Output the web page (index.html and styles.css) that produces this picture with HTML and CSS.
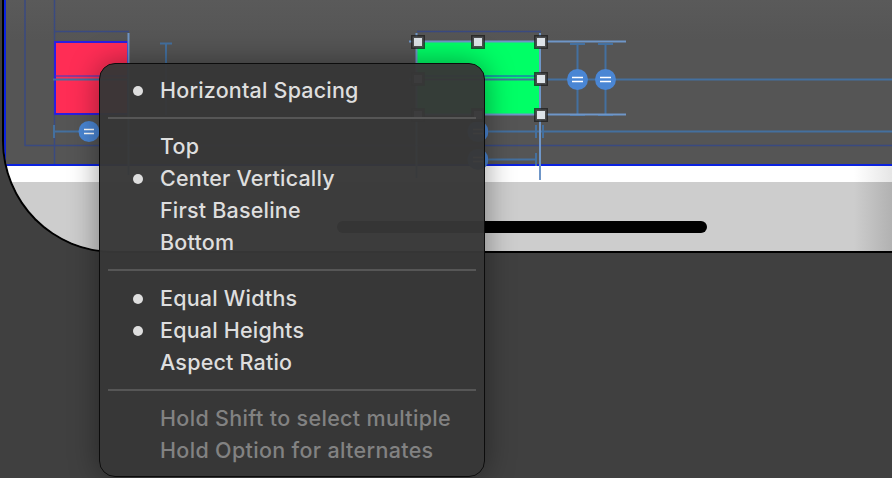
FILE: index.html
```html
<!DOCTYPE html>
<html lang="en">

<head>
    <meta charset="utf-8">
    <meta name="viewport" content="width=device-width, initial-scale=1.0">
    <title>Constraints Menu</title>
    <link rel="stylesheet" href="styles.css">
</head>

<body>
    <div class="device">
        <div class="screen"></div>
        <div class="safe-band"></div>
        <div class="bottom-bar"><span class="home-bar"></span></div>
    </div>

    <svg class="canvas" width="892" height="478" viewBox="0 0 892 478">
        <!-- layout margins -->
        <g class="guide-dark">
            <path d="M25 0V145.500H892" />
            <path d="M54.500 0V164" />
            <path d="M54 31.500H129" />
            <path d="M417 31.500H541" />
        </g>

        <!-- views -->
        <rect class="view-red" x="55" y="42" width="73" height="72" />
        <rect class="view-green" x="417" y="42" width="123" height="72" />
        <path class="view-split" d="M55 76H128M417 76H540" />

        <!-- constraints -->
        <g class="constraint">
            <path d="M53 79.500H128" />
            <path d="M409 79.500H892" />
            <path d="M160 43.500H172M166 43.500V115" />
            <path d="M54 125V138M54 131.500H80" />
            <path d="M489 131.500H892M536 125V138M543 125V138" />
            <path d="M489 159.500H536M536 153V166" />
            <path d="M577.500 43V115M605.500 43V115" />
            <path d="M570 44H585M598 44H613M570 115H585M598 115H613" />
        </g>

        <g class="selection">
            <path d="M128.500 33V175" />
            <path d="M409 41.500H626" />
            <path d="M417 114.500H626" />
            <path d="M416.500 33V178" />
            <path d="M540 33V180" />
        </g>

        <!-- equal badges -->
        <g class="badge">
            <circle cx="89" cy="131.500" r="10.500" />
            <path d="M84 129.500H94M84 133.500H94" />
        </g>
        <g class="badge">
            <circle cx="478" cy="131.500" r="10.500" />
            <path d="M473 129.500H483M473 133.500H483" />
        </g>
        <g class="badge">
            <circle cx="478" cy="159.500" r="10.500" />
            <path d="M473 157.500H483M473 161.500H483" />
        </g>
        <g class="badge">
            <circle cx="577.500" cy="79.500" r="10.500" />
            <path d="M572 77.500H583M572 81.500H583" />
        </g>
        <g class="badge">
            <circle cx="605.500" cy="79.500" r="10.500" />
            <path d="M600 77.500H611M600 81.500H611" />
        </g>

        <!-- resize handles -->
        <g class="handle">
            <rect x="412.500" y="36.500" width="11" height="11" />
            <rect x="472.500" y="36.500" width="11" height="11" />
            <rect x="535.500" y="36.500" width="11" height="11" />
            <rect x="412.500" y="73.500" width="11" height="11" />
            <rect x="535.500" y="73.500" width="11" height="11" />
            <rect x="412.500" y="109.500" width="11" height="11" />
            <rect x="472.500" y="109.500" width="11" height="11" />
            <rect x="535.500" y="109.500" width="11" height="11" />
        </g>
    </svg>

    <div class="menu">
        <div class="menu-row"><span class="mark on"></span>Horizontal Spacing</div>
        <hr class="menu-sep">
        <div class="menu-row"><span class="mark"></span>Top</div>
        <div class="menu-row"><span class="mark on"></span>Center Vertically</div>
        <div class="menu-row"><span class="mark"></span>First Baseline</div>
        <div class="menu-row"><span class="mark"></span>Bottom</div>
        <hr class="menu-sep">
        <div class="menu-row"><span class="mark on"></span>Equal Widths</div>
        <div class="menu-row"><span class="mark on"></span>Equal Heights</div>
        <div class="menu-row"><span class="mark"></span>Aspect Ratio</div>
        <hr class="menu-sep">
        <div class="menu-row hint"><span class="mark"></span>Hold Shift to select multiple</div>
        <div class="menu-row hint"><span class="mark"></span>Hold Option for alternates</div>
    </div>
</body>

</html>
```

FILE: styles.css
```css
:root {
    --outside: #404040;
    --blue-edge: #0a22e0;
    --menu-text: #dedede;
    --badge: #4a86d4;
}

* {
    box-sizing: border-box;
    margin: 0;
    padding: 0;
}

html,
body {
    width: 892px;
    height: 478px;
    overflow: hidden;
}

body {
    position: relative;
    background: var(--outside);
    font-family: Inter, "Liberation Sans", sans-serif;
}

/* the phone on the storyboard, only its lower left part is in frame */
.device {
    position: absolute;
    left: 2px;
    top: 0;
    width: 890px;
    height: 253px;
    display: flex;
    flex-direction: column;
    border-left: 2px solid #000;
    border-bottom: 2px solid #000;
    border-bottom-left-radius: 112px;
    overflow: hidden;
}

.screen {
    flex: 1;
    border-left: 2px solid var(--blue-edge);
    border-bottom: 2px solid var(--blue-edge);
    background: linear-gradient(180deg, #5a5a5a, #555 40px);
}

.safe-band {
    height: 16px;
    background: linear-gradient(90deg, #fff 850px, #e4e4e4 890px);
}

.bottom-bar {
    height: 69px;
    padding: 39px 0 0 333px;
    background: linear-gradient(90deg, #cdcdcd 850px, #b0b0b0 890px);
}

.home-bar {
    display: block;
    width: 370px;
    height: 12px;
    border-radius: 6px;
    background: #000;
}

.canvas {
    position: absolute;
    left: 0;
    top: 0;
}

.canvas path {
    fill: none;
}

.guide-dark path {
    stroke: #3a4a80;
    stroke-width: 1.5;
}

.view-red {
    fill: #ff2d55;
    stroke: #2a1fe0;
    stroke-width: 2;
}

.view-green {
    fill: #00ff66;
}

.canvas .view-split {
    stroke: #2a40d0;
    stroke-width: 1;
}

.constraint path {
    stroke: #44709f;
    stroke-width: 2;
}

.selection path {
    stroke: #6f96c8;
    stroke-width: 2;
}

.badge circle {
    fill: var(--badge);
}

.badge path {
    stroke: #fff;
    stroke-width: 1.5;
}

.handle rect {
    fill: #dde3e8;
    stroke: rgba(30, 30, 30, 0.75);
    stroke-width: 3;
}

.menu {
    position: absolute;
    left: 99px;
    top: 63px;
    width: 386px;
    height: 414px;
    padding: 10px 8px;
    border: 1px solid #0c0c0c;
    border-radius: 16px;
    background: rgba(55, 55, 55, 0.97);
    box-shadow: 0 0 30px rgba(0, 0, 0, 0.4);
    color: var(--menu-text);
    font-size: 21.5px;
    font-weight: 500;
    letter-spacing: 0.2px;
}

.menu-row {
    height: 32px;
    display: flex;
    align-items: center;
}

.mark {
    width: 52px;
    flex: none;
}

.mark.on::before {
    content: "";
    display: block;
    width: 10px;
    height: 10px;
    margin: 2px 0 0 25px;
    border-radius: 50%;
    background: var(--menu-text);
}

.menu-sep {
    height: 2px;
    margin: 11px 0;
    border: 0;
    background: #565656;
}

.hint {
    color: #828282;
    letter-spacing: 0.33px;
}
```
